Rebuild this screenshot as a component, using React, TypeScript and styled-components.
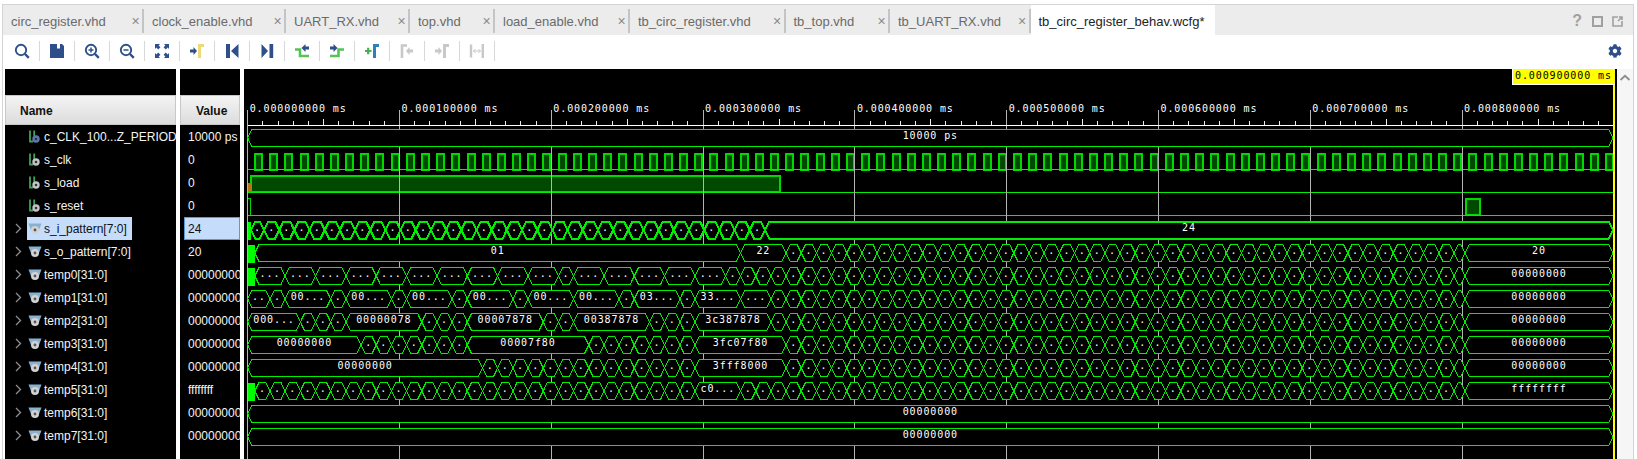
import React from 'react'
import styled, { createGlobalStyle } from 'styled-components'
import { FaCog } from 'react-icons/fa'

const GlobalStyle = createGlobalStyle`
  html, body {
    margin: 0;
    padding: 0;
    background: #fff;
    overflow: hidden;
  }
  * { box-sizing: border-box; }
`

/* ---------- data ---------- */

const TABS: [string, number][] = [
  ['circ_register.vhd', 141],
  ['clock_enable.vhd', 142],
  ['UART_RX.vhd', 124],
  ['top.vhd', 85],
  ['load_enable.vhd', 135],
  ['tb_circ_register.vhd', 155.5],
  ['tb_top.vhd', 104.5],
  ['tb_UART_RX.vhd', 140.5],
]

type Kind = 'const' | 'bit' | 'bus'

const SIGNALS: { name: string; value: string; kind: Kind; selected?: boolean }[] = [
  { name: 'c_CLK_100...Z_PERIOD', value: '10000 ps', kind: 'const' },
  { name: 's_clk', value: '0', kind: 'bit' },
  { name: 's_load', value: '0', kind: 'bit' },
  { name: 's_reset', value: '0', kind: 'bit' },
  { name: 's_i_pattern[7:0]', value: '24', kind: 'bus', selected: true },
  { name: 's_o_pattern[7:0]', value: '20', kind: 'bus' },
  { name: 'temp0[31:0]', value: '00000000', kind: 'bus' },
  { name: 'temp1[31:0]', value: '00000000', kind: 'bus' },
  { name: 'temp2[31:0]', value: '00000000', kind: 'bus' },
  { name: 'temp3[31:0]', value: '00000000', kind: 'bus' },
  { name: 'temp4[31:0]', value: '00000000', kind: 'bus' },
  { name: 'temp5[31:0]', value: 'ffffffff', kind: 'bus' },
  { name: 'temp6[31:0]', value: '00000000', kind: 'bus' },
  { name: 'temp7[31:0]', value: '00000000', kind: 'bus' },
]

/* ---------- waveform geometry, page pixels ---------- */

const T0 = 247.7
const DIV = 151.8
const PERIOD = 15.18
const END = 1613
const GREEN = '#00ee00'
const PULSE = '#00d800'
const rowTop = (i: number) => 129.5 + 23 * i
const edge = (k: number) => 254.8 + PERIOD * k

type Seg = { a: number; b: number; label?: string }
type Mark = [number, string]

// segments up to each mark, then one-period hexagons until the last short one and the final value
function busRow(start: number, marks: Mark[], last: string): Seg[] {
  const segs: Seg[] = []
  let from = start
  let k = 0
  marks.forEach(([to, label]) => {
    segs.push({ a: from, b: edge(to), label })
    from = edge(to)
    k = to
  })
  for (; k < 79; k++) {
    segs.push({ a: edge(k), b: edge(k + 1), label: '.' })
  }
  segs.push({ a: edge(79), b: 1465 })
  segs.push({ a: 1465, b: END, label: last })
  return segs
}

const dots = (list: number[], label = '...'): Mark[] => list.map((k) => [k, label] as Mark)

const BUS_ROWS: { row: number; block?: number; segs: Seg[]; thick?: boolean }[] = [
  { row: 0, segs: [{ a: T0, b: END, label: '10000 ps' }] },
  {
    row: 4,
    block: 251,
    thick: true,
    segs: [
      { a: 251, b: 264, label: '.' },
      ...Array.from({ length: 33 }, (_, j) => ({
        a: 264 + PERIOD * j,
        b: 264 + PERIOD * (j + 1),
        label: '.',
      })),
      { a: 264 + PERIOD * 33, b: END, label: '24' },
    ],
  },
  { row: 5, block: 255, segs: busRow(edge(0), [[32, '01'], [35, '22']], '20') },
  {
    row: 6,
    block: 255,
    segs: busRow(
      edge(0),
      [...dots([2, 4, 6, 8, 10, 12, 14, 16, 18, 20]), [21, '.'], ...dots([23, 25, 27, 29, 31])],
      '00000000',
    ),
  },
  {
    row: 7,
    segs: busRow(
      T0,
      [
        [1, '..'], [2, '.'], [5, '00...'], [6, '.'], [9, '00...'], [10, '.'], [13, '00...'],
        [14, '.'], [17, '00...'], [18, '.'], [21, '00...'], [24, '00...'], [25, '.'],
        [28, '03...'], [29, '.'], [32, '33...'], [34, '...'],
      ],
      '00000000',
    ),
  },
  {
    row: 8,
    segs: busRow(
      T0,
      [
        [3, '000...'], [4, '.'], [5, '.'], [6, '.'], [11, '00000078'], [12, '.'], [13, '.'],
        [14, '.'], [19, '00007878'], [20, '.'], [21, '.'], [26, '00387878'], [27, '.'],
        [28, '.'], [29, '.'], [34, '3c387878'],
      ],
      '00000000',
    ),
  },
  {
    row: 9,
    segs: busRow(
      T0,
      [
        [7, '00000000'], [8, '.'], [9, '.'], [10, '.'], [11, '.'], [12, '.'], [13, '.'],
        [14, '.'], [22, '00007f80'], [23, '.'], [24, '.'], [25, '.'], [26, '.'], [27, '.'],
        [28, '.'], [29, '.'], [35, '3fc07f80'],
      ],
      '00000000',
    ),
  },
  {
    row: 10,
    segs: busRow(
      T0,
      [
        [15, '00000000'],
        ...Array.from({ length: 14 }, (_, j) => [16 + j, '.'] as Mark),
        [35, '3fff8000'],
      ],
      '00000000',
    ),
  },
  {
    row: 11,
    block: 255,
    segs: busRow(
      edge(0),
      [...Array.from({ length: 29 }, (_, j) => [j + 1, '.'] as Mark), [32, 'c0...']],
      'ffffffff',
    ),
  },
  { row: 12, segs: [{ a: T0, b: END, label: '00000000' }] },
  { row: 13, segs: [{ a: T0, b: END, label: '00000000' }] },
]

function hexPoints(a: number, b: number, top: number) {
  const bot = top + 17
  const mid = top + 8.5
  const d = Math.min(4.2, (b - a) / 2)
  return `${a},${mid} ${a + d},${top} ${b - d},${top} ${b},${mid} ${b - d},${bot} ${a + d},${bot}`
}

/* ---------- layout ---------- */

const Page = styled.div`
  width: 1637px;
  height: 459px;
  padding: 4px 3px 0 2px;
  background: #fff;
`

const Window = styled.div`
  width: 1632px;
  height: 455px;
  display: flex;
  flex-direction: column;
  border: 1px solid #d4d4d4;
  border-bottom: 0;
  background: #fff;
  font-family: 'Liberation Sans', Arial, sans-serif;
`

const TabBar = styled.div`
  height: 30px;
  flex: none;
  display: flex;
  align-items: center;
  padding-right: 10px;
  background: #ececec;
`

const Tab = styled.div<{ $width: number }>`
  width: ${(p) => p.$width}px;
  flex: none;
  height: 24px;
  margin-top: 2px;
  display: flex;
  align-items: center;
  justify-content: space-between;
  padding: 0 2px 0 8px;
  border-right: 2px solid #c4c4c4;
  font-size: 13px;
  color: #6a6a6a;
  white-space: nowrap;
`

const ActiveTab = styled.div`
  height: 30px;
  width: 184px;
  flex: none;
  display: flex;
  align-items: center;
  padding: 2px 0 0 8px;
  background: #fff;
  font-size: 13px;
  color: #222;
  white-space: nowrap;
`

const CloseMark = styled.span`
  width: 9px;
  font-size: 14px;
  line-height: 14px;
  color: #8a8a8a;
  text-align: center;
`

const ViewActions = styled.div`
  margin-left: auto;
  padding-top: 2px;
  display: flex;
  align-items: center;
  gap: 9.5px;
  color: #a0a0a0;
  font-size: 16px;
  font-weight: bold;
`

const Toolbar = styled.div`
  height: 32px;
  flex: none;
  display: flex;
  align-items: center;
  padding: 0 11px 0 2px;
  background: #fff;
`

const ToolCell = styled.div`
  width: 35px;
  height: 20px;
  display: flex;
  align-items: center;
  justify-content: center;
  border-right: 1px solid #d8d8d8;
`

const GearSlot = styled.div`
  margin-left: auto;
  display: flex;
  color: #2f4f8a;
`

const Main = styled.div`
  margin-top: 2px;
  flex: 1;
  min-height: 0;
  display: flex;
  gap: 4px;
  padding-left: 2px;
`

const Column = styled.div<{ $width: number }>`
  width: ${(p) => p.$width}px;
  flex: none;
  background: #000;
  overflow: hidden;
  padding-top: 26px;
`

const HeaderCell = styled.div<{ $inset: number }>`
  height: 30px;
  display: flex;
  align-items: center;
  padding: 2px 0 0 ${(p) => p.$inset}px;
  background: linear-gradient(#f4f4f4, #dcdcdc);
  border: 1px solid #c8c8c8;
  font-size: 12px;
  font-weight: bold;
  color: #111;
`

const NameRow = styled.div`
  height: 23px;
  display: flex;
  align-items: center;
  font-size: 12px;
  color: #f4f4f4;
  white-space: nowrap;
`

const ChevronSlot = styled.div`
  width: 22px;
  flex: none;
  display: flex;
  justify-content: center;
  padding-left: 4px;
`

const NameCell = styled.div<{ $selected?: boolean }>`
  height: 23px;
  display: flex;
  align-items: center;
  gap: 2px;
  padding: 0 5px 0 1px;
  background: ${(p) => (p.$selected ? '#c6dcfb' : 'transparent')};
  color: ${(p) => (p.$selected ? '#111' : 'inherit')};
`

const ValueRow = styled.div<{ $selected?: boolean }>`
  height: 23px;
  display: flex;
  align-items: center;
  margin-left: ${(p) => (p.$selected ? 4 : 0)}px;
  padding-left: ${(p) => (p.$selected ? 3 : 8)}px;
  background: ${(p) => (p.$selected ? '#c6dcfb' : 'transparent')};
  border: ${(p) => (p.$selected ? '1px solid #5b9ad6' : '0')};
  font-size: 12px;
  color: ${(p) => (p.$selected ? '#111' : '#f4f4f4')};
  white-space: nowrap;
`

const WavePanel = styled.div`
  position: relative;
  width: 1373px;
  flex: none;
  background: #000;
  overflow: hidden;
`

const WaveSvg = styled.svg`
  display: block;
  width: 1373px;
  height: 390px;
`

const WaveText = styled.text`
  font-family: 'DejaVu Sans Mono', 'Liberation Mono', monospace;
  font-size: 10px;
  letter-spacing: 0.9px;
  fill: #fff;
`

const CursorLine = styled.div`
  position: absolute;
  left: 1369px;
  top: 0;
  bottom: 0;
  width: 2px;
  background: #ffff00;
`

const CursorLabel = styled.div`
  position: absolute;
  left: 1268px;
  top: 0;
  width: 103px;
  height: 16px;
  padding-left: 2px;
  background: #ffff00;
  border-left: 1px solid #fff;
  border-bottom: 1px solid #fff;
  font-family: 'DejaVu Sans Mono', 'Liberation Mono', monospace;
  font-size: 10px;
  letter-spacing: 0.9px;
  line-height: 13px;
  color: #000;
  white-space: nowrap;
`

const ScrollBar = styled.div`
  margin-left: -4px;
  width: 16px;
  flex: none;
  display: flex;
  justify-content: center;
  padding-top: 5px;
  background: #f6f6f6;
`

/* ---------- icons ---------- */

const NAVY = '#2f4f8a'
const YELLOW = '#ecd977'
const LIME = '#55c25a'
const OFF = '#c8c8c8'

const ArrowR = ({ x, color }: { x: number; color: string }) => (
  <path d={`M${x} 8.5h3.5V6l3.5 4-3.5 4v-2.5H${x}z`} fill={color} />
)
const ArrowL = ({ x, color }: { x: number; color: string }) => (
  <path d={`M${x + 7} 8.5h-3.5V6L${x} 10l3.5 4v-2.5H${x + 7}z`} fill={color} />
)
const Bracket = ({ x, color }: { x: number; color: string }) => (
  <path d={`M${x + 1.5} 17V4.5H${x + 6}`} fill="none" stroke={color} strokeWidth={3} />
)
const Lens = ({ mark }: { mark?: 'plus' | 'minus' }) => (
  <g fill="none" stroke={NAVY}>
    <circle cx={9} cy={9} r={5.2} strokeWidth={1.9} />
    <path d="M13 13l3.8 3.8" strokeWidth={2.4} />
    {mark && <path d="M6.5 9h5" strokeWidth={1.5} />}
    {mark === 'plus' && <path d="M9 6.5v5" strokeWidth={1.5} />}
  </g>
)

const TOOL_ICONS: React.ReactNode[] = [
  <Lens key="find" />,
  <path key="save" fillRule="evenodd" d="M3 3h12l2 2v12H3zM10 3v4.5h3V3z" fill={NAVY} />,
  <Lens key="in" mark="plus" />,
  <Lens key="out" mark="minus" />,
  <g key="fit" fill={NAVY}>
    <path d="M3 3h5L6.6 4.4 8.4 6.2 6.2 8.4 4.4 6.6 3 8z" />
    <path d="M17 3h-5l1.4 1.4-1.8 1.8 2.2 2.2 1.8-1.8L17 8z" />
    <path d="M3 17h5l-1.4-1.4 1.8-1.8-2.2-2.2-1.8 1.8L3 12z" />
    <path d="M17 17h-5l1.4-1.4-1.8-1.8 2.2-2.2 1.8 1.8L17 12z" />
  </g>,
  <g key="marker">
    <ArrowR x={3} color={NAVY} />
    <Bracket x={11} color={YELLOW} />
  </g>,
  <path key="prev" d="M4 3h4v14H4zM16.5 3v14L9 10z" fill={NAVY} />,
  <path key="next" d="M4.5 3v14L11 10zM12.5 3h3.7v14h-3.7z" fill={NAVY} />,
  <g key="swap-l">
    <path d="M3 8.5h5V15h9" fill="none" stroke={LIME} strokeWidth={2.6} />
    <path d="M17 5.5h-3.5V3L9.5 7l4 4V8.5H17z" fill={NAVY} />
  </g>,
  <g key="swap-r">
    <path d="M3 15h8.5V8.5H17" fill="none" stroke={LIME} strokeWidth={2.6} />
    <path d="M3 5.5h3.5V3l4 4-4 4V8.5H3z" fill={NAVY} />
  </g>,
  <g key="add">
    <path d="M3 10h6.5M6.2 6.7v6.6" fill="none" stroke="#3fb54f" strokeWidth={2.2} />
    <Bracket x={11} color="#2f80b8" />
  </g>,
  <g key="off-l">
    <path d="M5 17V4.5H10" fill="none" stroke={OFF} strokeWidth={2.6} />
    <ArrowL x={9} color={OFF} />
  </g>,
  <g key="off-r">
    <ArrowR x={3} color={OFF} />
    <Bracket x={11} color={OFF} />
  </g>,
  <g key="off-w" fill="none" stroke={OFF}>
    <path d="M4 3.5v13M15.8 3v14" strokeWidth={2.4} />
    <path d="M6.5 10h7M8.5 8l-2 2 2 2M11.5 8l2 2-2 2" strokeWidth={1} />
  </g>,
]

const ToolIcon = ({ children }: { children: React.ReactNode }) => (
  <svg width={20} height={20} viewBox="0 0 20 20">
    {children}
  </svg>
)

const RowChevron = () => (
  <svg width={7} height={11} viewBox="0 0 7 11">
    <path d="M1 1l4.5 4.5L1 10" fill="none" stroke="#8e8e8e" strokeWidth={1.3} />
  </svg>
)

const SignalIcon = ({ kind }: { kind: Kind }) =>
  kind === 'bus' ? (
    <svg width={14} height={14} viewBox="0 0 14 14">
      <path d="M0.5 1.5h13l-2.5 6.5H3z" fill="#8ab0d0" />
      <circle cx={7} cy={8} r={4} fill="#d2d2d2" />
      <circle cx={7} cy={8} r={1.4} fill="#555" />
    </svg>
  ) : (
    <svg width={14} height={14} viewBox="0 0 14 14">
      <path d="M2 0.5v11h3M6.2 0.5v6" fill="none" stroke="#3f9f5f" strokeWidth={1.8} />
      <circle cx={8} cy={9} r={3.7} fill={kind === 'const' ? '#5a78b0' : '#c4c4c4'} />
      <circle cx={8} cy={9} r={1.3} fill="#333" />
    </svg>
  )

/* ---------- waveform ---------- */

function Ruler() {
  const ticks = Array.from({ length: 90 }, (_, i) => T0 + (i * DIV) / 10)
  return (
    <g shapeRendering="crispEdges">
      <line x1={T0} x2={END} y1={125.5} y2={125.5} stroke="#fff" />
      {ticks.map((x, i) =>
        i % 10 === 0 ? null : (
          <line key={i} x1={x} x2={x} y1={i % 5 === 0 ? 119 : 121} y2={125} stroke="#eee" />
        ),
      )}
    </g>
  )
}

function BitRows() {
  const pulses = Array.from({ length: 90 }, (_, j) => 254 + PERIOD * j).filter((x) => x < END - 6)
  const line = (y: number) => <line x1={T0} x2={END} y1={y} y2={y} stroke={GREEN} />
  const pulse = (x: number, w: number, top: number, key: number | string) => (
    <rect
      key={key}
      x={x + 1}
      y={top + 1}
      width={w - 2}
      height={16}
      fill="#004a00"
      stroke={PULSE}
      strokeWidth={2}
    />
  )
  return (
    <g shapeRendering="crispEdges">
      {pulses.map((x, j) => pulse(x, 9, 152.5, j))}
      {line(169.5)}
      {pulse(250, 531, 175, 'load')}
      <rect x={T0} y={183} width={3} height={9} fill="#b8741a" />
      {line(192.5)}
      <rect x={T0} y={198.5} width={3} height={17} fill="none" stroke={PULSE} strokeWidth={1.5} />
      {pulse(1465, 16, 198, 'reset')}
      {line(215.5)}
    </g>
  )
}

function BusRow({ row, block, segs, thick }: (typeof BUS_ROWS)[number]) {
  const top = rowTop(row)
  return (
    <g>
      {block && (
        <rect x={T0} y={top} width={block - T0} height={18} fill="#00ff00" shapeRendering="crispEdges" />
      )}
      {segs.map((s, i) => (
        <polygon
          key={i}
          points={hexPoints(s.a, s.b, top)}
          fill="#000"
          stroke={GREEN}
          strokeWidth={thick ? 2 : 1}
          shapeRendering="crispEdges"
        />
      ))}
      {segs.map((s, i) =>
        s.label ? (
          <WaveText key={i} x={(s.a + s.b) / 2} y={top + 9.5} textAnchor="middle">
            {s.label}
          </WaveText>
        ) : null,
      )}
    </g>
  )
}

function Waves() {
  const majors = Array.from({ length: 9 }, (_, i) => T0 + i * DIV)
  return (
    <WaveSvg viewBox="244 69 1373 390">
      <BitRows />
      <g shapeRendering="crispEdges">
        {majors.map((x) => (
          <line key={x} x1={x} x2={x} y1={110} y2={459} stroke="#b4b4b4" />
        ))}
      </g>
      <Ruler />
      {majors.map((x, i) => (
        <WaveText key={x} x={x + 2} y={112}>
          {`0.000${i}00000 ms`}
        </WaveText>
      ))}
      {BUS_ROWS.map((r) => (
        <BusRow key={r.row} {...r} />
      ))}
    </WaveSvg>
  )
}

export default function App() {
  return (
    <Page>
      <GlobalStyle />
      <Window>
        <TabBar>
          {TABS.map(([t, w]) => (
            <Tab key={t} $width={w}>
              {t}
              <CloseMark>×</CloseMark>
            </Tab>
          ))}
          <ActiveTab>tb_circ_register_behav.wcfg*</ActiveTab>
          <ViewActions>
            ?
            <svg width={11} height={11} viewBox="0 0 11 11">
              <rect x={1} y={1} width={9} height={9} fill="none" stroke="#a0a0a0" strokeWidth={2} />
            </svg>
            <svg width={11} height={11} viewBox="0 0 11 11">
              <path d="M6 1H1v9h9V5M6 5l4-4M7 1h3v3" fill="none" stroke="#a0a0a0" strokeWidth={1.6} />
            </svg>
          </ViewActions>
        </TabBar>
        <Toolbar>
          {TOOL_ICONS.map((icon, i) => (
            <ToolCell key={i}>
              <ToolIcon>{icon}</ToolIcon>
            </ToolCell>
          ))}
          <GearSlot>
            <FaCog size={14} />
          </GearSlot>
        </Toolbar>
        <Main>
          <Column $width={171}>
            <HeaderCell $inset={14}>Name</HeaderCell>
            {SIGNALS.map((s) => (
              <NameRow key={s.name}>
                <ChevronSlot>{s.kind === 'bus' && <RowChevron />}</ChevronSlot>
                <NameCell $selected={s.selected}>
                  <SignalIcon kind={s.kind} />
                  {s.name}
                </NameCell>
              </NameRow>
            ))}
          </Column>
          <Column $width={60}>
            <HeaderCell $inset={15}>Value</HeaderCell>
            {SIGNALS.map((s) => (
              <ValueRow key={s.name} $selected={s.selected}>
                {s.value}
              </ValueRow>
            ))}
          </Column>
          <WavePanel>
            <Waves />
            <CursorLine />
            <CursorLabel>0.000900000 ms</CursorLabel>
          </WavePanel>
          <ScrollBar>
            <svg width={12} height={8} viewBox="0 0 12 8">
              <path d="M1.5 6L6 1.8 10.5 6" fill="none" stroke="#8c8c8c" strokeWidth={1.8} />
            </svg>
          </ScrollBar>
        </Main>
      </Window>
    </Page>
  )
}
